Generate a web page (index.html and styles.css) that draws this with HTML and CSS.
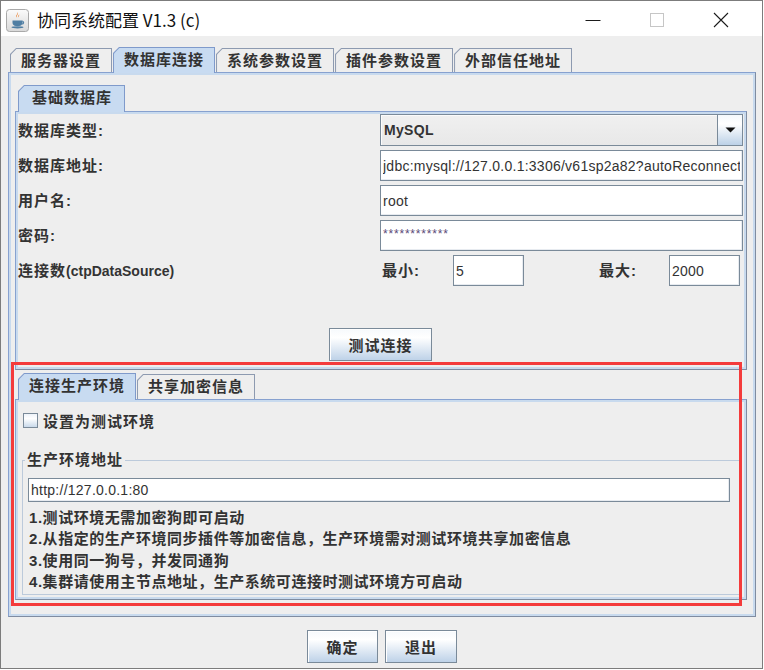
FILE: index.html
```html
<!DOCTYPE html>
<html lang="zh-CN">
<head>
    <meta charset="UTF-8">
    <meta name="viewport" content="width=device-width, initial-scale=1.0">
    <title>协同系统配置 V1.3 (c)</title>
    <link rel="stylesheet" href="styles.css">
</head>
<body>
<div class="window">
    <div class="titlebar">
        <span class="app-icon">
            <svg width="23" height="23" viewBox="0 0 23 23">
                <defs>
                    <linearGradient id="iconBg" x1="0" y1="0" x2="0" y2="1">
                        <stop offset="0" stop-color="#fbfbfb"/>
                        <stop offset="1" stop-color="#d9d9d9"/>
                    </linearGradient>
                </defs>
                <rect x="0.5" y="0.5" width="22" height="22" rx="3" fill="url(#iconBg)" stroke="#a9a9a9"/>
                <path d="M11.6 3.2c1.6 1.7-1.9 3 -0.4 5.2c-2.6-1.4 0.9-3.1 0.4-5.2z M13.2 5.6c0.6 1.2-1.4 1.8-0.7 3c-1.3-0.8 0.1-2 0.7-3z" fill="#e8761f"/>
                <path d="M6.5 11.5h10v2.2c0 1.8-1.5 3.3-3.3 3.3h-3.4c-1.8 0-3.3-1.5-3.3-3.3z" fill="#4f7ea3"/>
                <path d="M16.4 12.4c1.6 0 1.6 2.6 -0.4 2.6" fill="none" stroke="#4f7ea3" stroke-width="1.2"/>
                <ellipse cx="11.5" cy="18.3" rx="6" ry="1.1" fill="#4f7ea3"/>
            </svg>
        </span>
        <span class="title">协同系统配置 V1.3 (c)</span>
        <div class="win-controls">
            <span class="wc">
                <svg width="16" height="16" viewBox="0 0 16 16"><path d="M0.5 8.5h15" stroke="#1b1b1b"/></svg>
            </span>
            <span class="wc">
                <svg width="16" height="16" viewBox="0 0 16 16"><rect x="1.5" y="1.5" width="13" height="13" fill="none" stroke="#c6c6c6"/></svg>
            </span>
            <span class="wc">
                <svg width="16" height="16" viewBox="0 0 16 16"><path d="M1 1L15 15M15 1L1 15" stroke="#1b1b1b" stroke-width="1.1"/></svg>
            </span>
        </div>
    </div>

    <div class="client">
        <div class="tab-row">
            <div class="tab">服务器设置</div>
            <div class="tab selected">数据库连接</div>
            <div class="tab">系统参数设置</div>
            <div class="tab">插件参数设置</div>
            <div class="tab">外部信任地址</div>
        </div>

        <div class="panel outer-panel">
            <div class="tab-row sub">
                <div class="tab selected wide">基础数据库</div>
            </div>
            <div class="panel db-panel">
                <div class="form-grid">
                    <label class="lbl">数据库类型:</label>
                    <div class="combo">
                        <span class="combo-value">MySQL</span>
                        <span class="combo-arrow">
                            <svg width="11" height="6" viewBox="0 0 11 6"><path d="M0.5 0.5h10l-5 5z" fill="#111"/></svg>
                        </span>
                    </div>

                    <label class="lbl">数据库地址:</label>
                    <input class="field" type="text" value="jdbc:mysql://127.0.0.1:3306/v61sp2a82?autoReconnect=true&amp;useUnicode=true">

                    <label class="lbl">用户名:</label>
                    <input class="field" type="text" value="root">

                    <label class="lbl">密码:</label>
                    <input class="field secret" type="text" value="************">

                    <label class="lbl">连接数<span class="latin">(ctpDataSource)</span></label>
                    <div class="pool">
                        <span class="lbl">最小:</span>
                        <input class="field" type="text" value="5">
                        <span></span>
                        <span class="lbl">最大:</span>
                        <input class="field" type="text" value="2000">
                    </div>
                </div>
                <div class="btn-row">
                    <button class="btn btn-test" type="button">测试连接</button>
                </div>
            </div>

            <div class="tab-row sub lower">
                <div class="tab selected">连接生产环境</div>
                <div class="tab">共享加密信息</div>
            </div>
            <div class="panel env-panel">
                <label class="check"><span class="check-box"></span>设置为测试环境</label>
                <fieldset class="addr">
                    <legend>生产环境地址</legend>
                    <input class="field short" type="text" value="http://127.0.0.1:80">
                    <div class="notes">
                        <p>1.测试环境无需加密狗即可启动</p>
                        <p>2.从指定的生产环境同步插件等加密信息，生产环境需对测试环境共享加密信息</p>
                        <p>3.使用同一狗号，并发同通狗</p>
                        <p>4.集群请使用主节点地址，生产系统可连接时测试环境方可启动</p>
                    </div>
                </fieldset>
            </div>

            <div class="highlight"></div>
        </div>

        <div class="actions">
            <button class="btn btn-ok" type="button">确定</button>
            <button class="btn btn-exit" type="button">退出</button>
        </div>
    </div>
</div>
</body>
</html>
```

FILE: styles.css
```css
body {
    margin: 0;
    background: #ffffff;
    font-family: "Liberation Sans", "Noto Sans CJK SC", sans-serif;
    color: #333;
}

.window {
    width: 763px;
    height: 669px;
    box-sizing: border-box;
    border: 1px solid #7c7c7c;
    background: #eeeeee;
    display: flex;
    flex-direction: column;
}

/* title bar */
.titlebar {
    flex: none;
    height: 35px;
    background: #fff;
    display: flex;
    align-items: flex-start;
}
.app-icon {
    margin: 8px 8px 0 5px;
    height: 23px;
}
.title {
    margin-top: 8px;
    font-family: "Noto Sans CJK SC", sans-serif;
    font-size: 17px;
    line-height: 22px;
    color: #111;
}
.win-controls {
    margin-left: auto;
    margin-right: 9px;
    display: flex;
}
.wc {
    width: 64px;
    height: 35px;
    padding-top: 3px;
    box-sizing: border-box;
    display: flex;
    align-items: center;
    justify-content: center;
}

.client {
    flex: 1;
    display: flex;
    flex-direction: column;
    padding: 11px 6px 0 7px;
}

/* tabs (metal look, cut top-left corner) */
.tab-row {
    display: flex;
    align-items: flex-end;
    gap: 1px;
    margin-left: 2px;
    margin-bottom: -1px;
    position: relative;
    z-index: 1;
}
.tab-row.sub {
    margin-left: 3px;
}
.tab-row.lower {
    margin-top: 3px;
}
.tab {
    position: relative;
    z-index: 0;
    height: 24px;
    margin-bottom: 1px;
    padding: 0 11px;
    box-sizing: border-box;
    line-height: 25px;
    font-size: 15px;
    font-weight: bold;
    letter-spacing: 1px;
    color: #333;
    background: #8d9ab0;
    clip-path: polygon(6px 0, 100% 0, 100% 100%, 0 100%, 0 6px);
}
.tab::before {
    content: "";
    position: absolute;
    z-index: -1;
    left: 1px;
    top: 1px;
    right: 1px;
    bottom: 0;
    background: #eeeeee;
    clip-path: polygon(5.4px 0, 100% 0, 100% 100%, 0 100%, 0 5.4px);
}
.tab.selected {
    height: 26px;
    margin-bottom: 0;
    background: #7f9acb;
}
.tab.selected::before {
    background: #c8dbf1;
}
.tab-row.sub .tab {
    height: 25px;
    line-height: 26px;
}
.tab-row.sub .tab.selected {
    height: 27px;
}
.tab.wide {
    padding: 0 13px 0 14px;
}

/* tab content panels */
.panel {
    border: 1px solid;
    border-color: #87a1cf #7f8ca1 #7f8ca1 #87a1cf;
    box-shadow: inset 0 0 0 2px #c8daee;
}
.outer-panel {
    flex: 1;
    position: relative;
    padding: 12px 8px 0 6px;
}
.db-panel {
    padding: 3px 3px 8px 2px;
}

.form-grid {
    display: grid;
    grid-template-columns: 362px 363px;
    grid-auto-rows: 31px;
    row-gap: 4px;
}
.lbl {
    font-size: 15px;
    font-weight: bold;
    letter-spacing: 1px;
    line-height: 31px;
    color: #333;
}
.latin {
    font-size: 14px;
    letter-spacing: 0;
}

.field {
    box-sizing: border-box;
    width: 100%;
    height: 31px;
    margin: 0;
    padding: 0 2px;
    border: 1px solid #7a8a99;
    box-shadow: inset -1px -1px 0 #e7ebf0;
    background: #fff;
    font-family: "Liberation Sans", sans-serif;
    font-size: 14px;
    letter-spacing: 0.25px;
    color: #333;
    outline: none;
}
.field.secret {
    font-size: 12px;
    letter-spacing: 0.8px;
    padding-bottom: 4px;
    color: #5a4a78;
}
.field.short {
    height: 24px;
}

.combo {
    display: flex;
    box-sizing: border-box;
    height: 32px;
    margin-top: -1px;
    border: 1px solid #7a8a99;
    background: linear-gradient(#f0f0f0, #e8e8e8);
    box-shadow: inset 1px 1px 0 #fbfbfb;
}
.combo-value {
    flex: 1;
    padding-left: 3px;
    line-height: 30px;
    font-size: 14px;
    font-weight: bold;
    letter-spacing: 0.3px;
    color: #333;
}
.combo-arrow {
    width: 24px;
    border-left: 1px solid #7a8a99;
    background: linear-gradient(#f4f8fc 0%, #ffffff 30%, #bcd1e7 100%);
    display: flex;
    align-items: center;
    justify-content: center;
}

.pool {
    display: grid;
    grid-template-columns: 73px 71px 73px 72px 71px;
}
.pool .lbl {
    padding-left: 2px;
}

.btn {
    box-sizing: border-box;
    height: 33px;
    padding: 0;
    border: 1px solid #7a8a99;
    background: linear-gradient(#f6f9fc 0%, #ffffff 28%, #bed2e8 100%);
    box-shadow: inset 1px 1px 0 #fff;
    font-family: "Liberation Sans", "Noto Sans CJK SC", sans-serif;
    font-size: 15px;
    font-weight: bold;
    letter-spacing: 1px;
    color: #333;
}
.btn-row {
    display: flex;
    justify-content: center;
    margin-top: 42px;
}
.btn-test {
    width: 103px;
}

/* lower tab: production environment */
.env-panel {
    padding: 8px 0 4px 0;
}
.check {
    display: flex;
    align-items: center;
    gap: 5px;
    height: 24px;
    padding-left: 7px;
    font-size: 15px;
    font-weight: bold;
    letter-spacing: 1px;
}
.check-box {
    width: 15px;
    height: 15px;
    box-sizing: border-box;
    border: 1px solid #7a8a99;
    background: linear-gradient(#eef3f9, #ffffff 35%, #c9d9ea);
}
.addr {
    margin: 18px 6px 0 6px;
    padding: 8px 9px 2px 5px;
    border: 1px solid #bccadb;
    min-width: 0;
}
.addr legend {
    margin-left: -3px;
    padding: 0 2px;
    font-size: 15px;
    font-weight: bold;
    letter-spacing: 1px;
    line-height: 20px;
    color: #333;
}
.notes {
    margin-top: 5px;
    padding-left: 1px;
}
.notes p {
    margin: 0;
    font-size: 15px;
    font-weight: bold;
    letter-spacing: 0.55px;
    line-height: 21.33px;
    color: #333;
}

/* red frame marking the production settings block */
.highlight {
    position: absolute;
    left: 2px;
    top: 289px;
    width: 731px;
    height: 244px;
    box-sizing: border-box;
    border: 3px solid #f43b3b;
    z-index: 2;
}

.actions {
    flex: none;
    display: flex;
    justify-content: center;
    gap: 7px;
    padding: 13px 0 5px;
}
.btn-ok {
    width: 71px;
}
.btn-exit {
    width: 72px;
}
```
